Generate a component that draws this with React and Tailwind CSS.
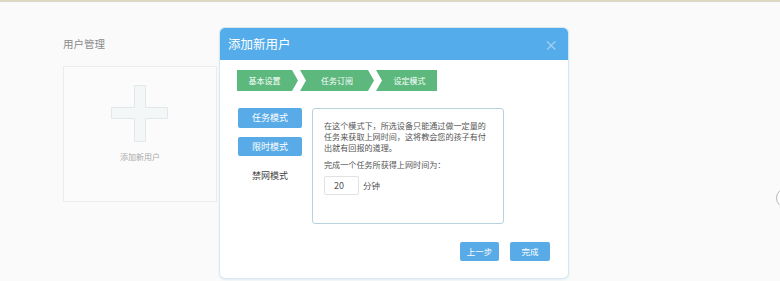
import React from 'react';

const font = { fontFamily: '"Noto Sans CJK SC", "Noto Sans", sans-serif' };

function Step({ label, className }) {
  return (
    <div className={`h-[21px] flex items-center justify-center bg-[#5cb87c] text-white text-[8px] ${className}`}>
      {label}
    </div>
  );
}

function PlusIcon() {
  return (
    <svg width="58" height="58" viewBox="0 0 58 58">
      <path
        d="M23.5 0.5 H34.5 V22.5 H56.5 V33.5 H34.5 V56.5 H23.5 V33.5 H0.5 V22.5 H23.5 Z"
        fill="#f4f7f7"
        stroke="#e2e8e8"
        strokeWidth="1"
      />
    </svg>
  );
}

export default function App() {
  return (
    <div className="relative w-[780px] h-[281px] overflow-hidden bg-[#fafafa]" style={font}>
      <div className="h-[2px] bg-[#dcd8c4]" />

      {/* page content */}
      <div className="pl-[63px] pt-[34px]">
        <div className="text-[10.5px] leading-[16px] text-[#8a8a8a]">用户管理</div>
        <div className="mt-[14px] w-[154px] h-[136px] border border-[#ececec] bg-[#fbfbfb] flex flex-col items-center">
          <div className="mt-[18px]">
            <PlusIcon />
          </div>
          <div className="mt-[8px] text-[8px] text-[#aaaaaa]">添加新用户</div>
        </div>
      </div>

      {/* scroll-top button, cut off at the edge */}
      <div className="absolute left-[776px] top-[188px] w-[20px] h-[20px] rounded-full border border-[#b8b8b8] bg-white" />

      {/* modal */}
      <div className="absolute left-[220px] top-[28px] w-[348px] h-[250px] rounded-[5px] bg-white shadow-[0_0_0_1px_#d6e8f2,0_1px_3px_rgba(120,170,200,0.35)] flex flex-col">
        <div className="h-[32px] rounded-t-[5px] bg-[#55acea] flex items-center justify-between pl-[8px] pr-[10px]">
          <span className="text-[12.5px] text-white">添加新用户</span>
          <span className="text-[14px] leading-none text-white/50">×</span>
        </div>

        <div className="pl-[17px] pt-[10px] flex">
          <Step label="基本设置" className="w-[61px] pr-[6px] [clip-path:polygon(0_0,55px_0,61px_50%,55px_100%,0_100%)]" />
          <Step label="任务订阅" className="ml-[2px] w-[74px] [clip-path:polygon(0_0,68px_0,74px_50%,68px_100%,0_100%,6px_50%)]" />
          <Step label="设定模式" className="ml-[2px] w-[61px] pl-[6px] [clip-path:polygon(0_0,100%_0,100%_100%,0_100%,6px_50%)]" />
        </div>

        <div className="pl-[18px] pt-[17px] flex gap-[10px]">
          <div className="w-[64px] flex flex-col gap-[9px] text-[9px]">
            <div className="h-[20px] rounded-[2px] bg-[#58abe6] text-white flex items-center justify-center">任务模式</div>
            <div className="h-[19px] rounded-[2px] bg-[#58abe6] text-white flex items-center justify-center">限时模式</div>
            <div className="h-[21px] text-[#444] flex items-center justify-center">禁网模式</div>
          </div>
          <div className="w-[192px] h-[116px] rounded-[3px] border border-[#b9d2de] pl-[11px] pt-[11px] text-[8.1px] text-[#555] whitespace-nowrap">
            <p className="leading-[11px]">在这个模式下，所选设备只能通过做一定量的</p>
            <p className="leading-[11px]">任务来获取上网时间，这将教会您的孩子有付</p>
            <p className="leading-[11px]">出就有回报的道理。</p>
            <p className="mt-[6px] leading-[11px]">完成一个任务所获得上网时间为：</p>
            <div className="mt-[6px] flex items-center gap-[4px]">
              <div className="w-[35px] h-[19px] border border-[#e2e2e2] rounded-[2px] pl-[9px] flex items-center text-[9px] text-[#555]">20</div>
              <span className="text-[8.5px]">分钟</span>
            </div>
          </div>
        </div>

        <div className="mt-auto pb-[17px] pr-[18px] flex justify-end gap-[11px] text-[8.5px] text-white">
          <div className="w-[39px] h-[19px] rounded-[2px] bg-[#58abe6] flex items-center justify-center">上一步</div>
          <div className="w-[40px] h-[19px] rounded-[2px] bg-[#58abe6] flex items-center justify-center">完成</div>
        </div>
      </div>
    </div>
  );
}
